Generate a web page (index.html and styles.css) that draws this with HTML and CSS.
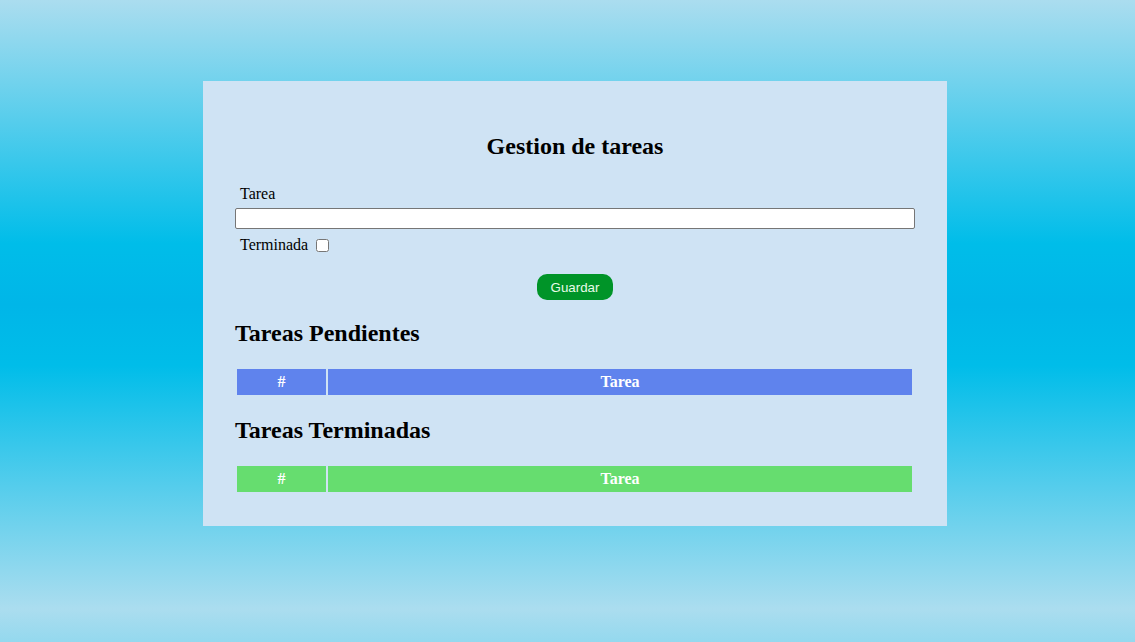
FILE: index.html
```html
<!DOCTYPE html>
<html lang="es">
<head>
<meta charset="utf-8">
<title>Gestion de tareas</title>
<link rel="stylesheet" href="styles.css">
</head>
<body>
<main class="card">
  <h2 class="title">Gestion de tareas</h2>
  <form class="form">
    <label class="label" for="tarea">Tarea</label>
    <input class="input" id="tarea" type="text">
    <div class="check-row">
      <label for="terminada">Terminada</label>
      <input class="checkbox" id="terminada" type="checkbox">
    </div>
    <div class="actions">
      <button class="btn" type="button">Guardar</button>
    </div>
  </form>
  <h2 class="section-title">Tareas Pendientes</h2>
  <table class="tasks pending">
    <thead><tr><th class="col-num">#</th><th>Tarea</th></tr></thead>
  </table>
  <h2 class="section-title">Tareas Terminadas</h2>
  <table class="tasks done">
    <thead><tr><th class="col-num">#</th><th>Tarea</th></tr></thead>
  </table>
</main>
</body>
</html>
```
FILE: styles.css
```css
html {
  min-height: 100%;
  background: linear-gradient(to bottom, #abddef 0%, #00bde9 40%, #00b6e8 50%, #00bde9 60%, #abddef 100%);
  background-size: 100% 609px;
  background-repeat: repeat-y;
}
body {
  margin: 0;
  padding: 81px 0 83px 15px;
  font-family: "Liberation Serif", "Times New Roman", serif;
  color: #000;
}
.card {
  width: 680px;
  margin: 0 auto;
  padding: 32px;
  background: #cfe3f4;
}
.title {
  margin: 20px 0 25px;
  font-size: 24px;
  text-align: center;
}
.form {
  display: flex;
  flex-direction: column;
}
.label {
  padding-left: 5px;
  font-size: 16px;
  line-height: 18px;
  margin-bottom: 5px;
}
.input {
  box-sizing: border-box;
  width: 100%;
  height: 21px;
  margin: 0;
  border: 1px solid #767676;
  border-radius: 2px;
  background: #fff;
}
.check-row {
  display: flex;
  align-items: center;
  padding-left: 5px;
  margin-top: 7px;
  font-size: 16px;
  line-height: 18px;
}
.checkbox {
  width: 13px;
  height: 13px;
  margin: 0 0 0 8px;
}
.actions {
  display: flex;
  justify-content: center;
  margin-top: 20px;
}
.btn {
  width: 76px;
  height: 26px;
  border: none;
  border-radius: 10px;
  background: #009428;
  color: #e8fbe8;
  font-family: "Liberation Sans", Arial, sans-serif;
  font-size: 13.33px;
  cursor: pointer;
}
.section-title {
  margin: 20px 0;
  font-size: 24px;
}
.tasks {
  width: 679px;
  border-spacing: 2px;
  margin: 0;
}
.tasks th {
  height: 26px;
  padding: 0;
  color: #fff;
  font-size: 16px;
  font-weight: bold;
}
.tasks .col-num {
  width: 89px;
}
.pending th {
  background: #5f83ed;
}
.done th {
  background: #66dd6f;
}
```
